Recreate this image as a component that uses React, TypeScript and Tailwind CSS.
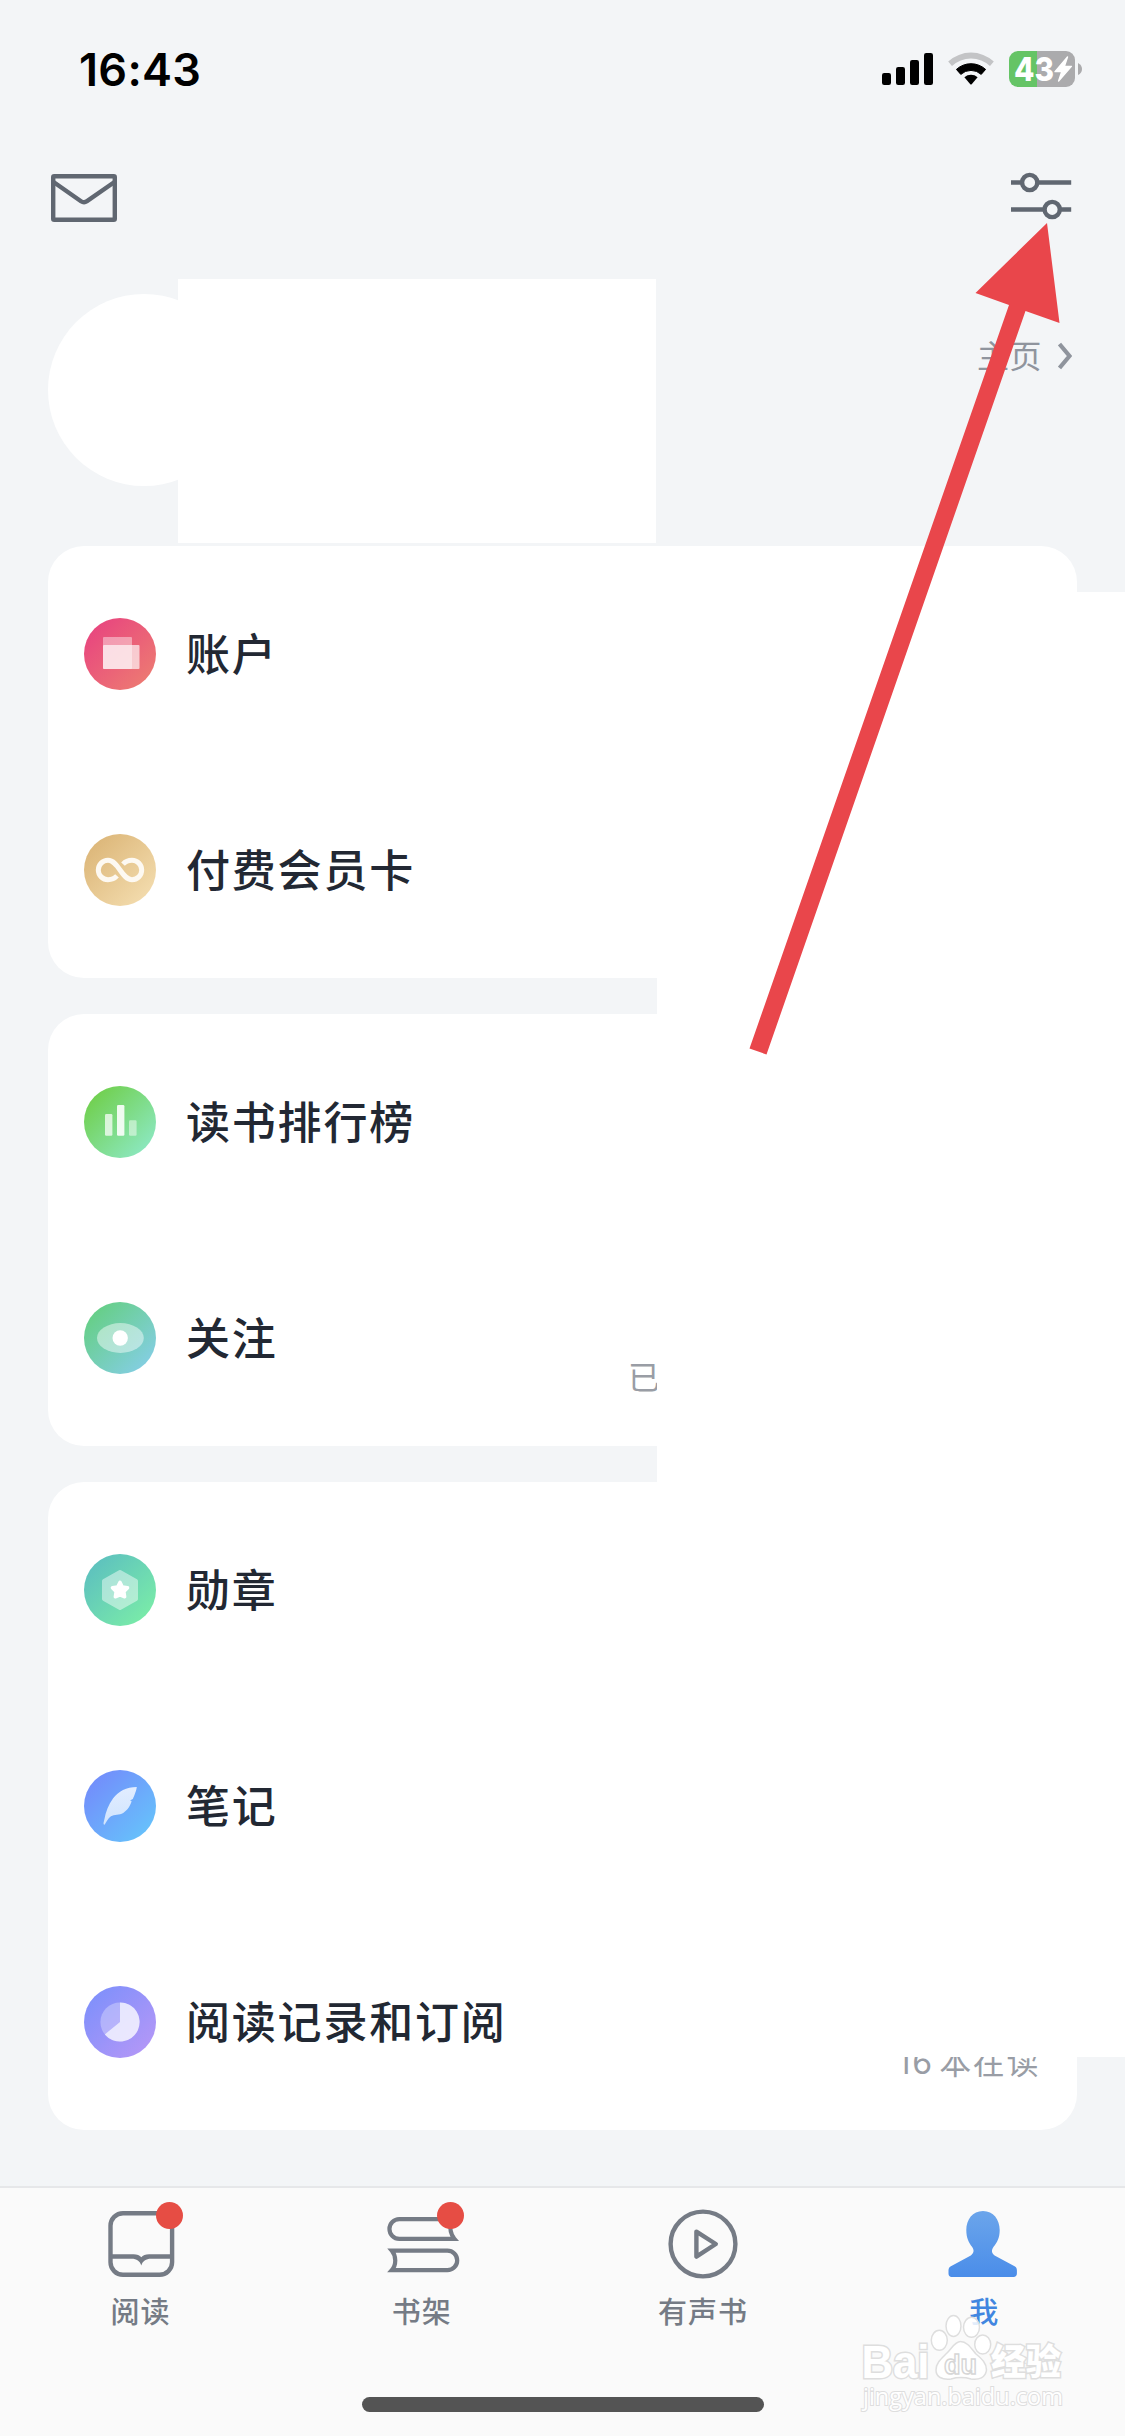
import type { ReactNode } from 'react';
import { clsx } from 'clsx';

interface MenuItem {
    id: string;
    label: string;
    from: string;
    to: string;
    glyph: ReactNode;
    note?: string;
    noteClass?: string;
}

interface Tab {
    id: string;
    label: string;
    icon: ReactNode;
    badge?: boolean;
    active?: boolean;
}

const menuGroups: MenuItem[][] = [
    [
        {
            id: 'account',
            label: '账户',
            from: '#e8457f',
            to: '#ed7a72',
            glyph: (
                <>
                    <rect x="19" y="19" width="29" height="32" rx="1" fill="#fff" opacity=".42" />
                    <rect x="19" y="27" width="36.5" height="24" rx="1" fill="#fff" opacity=".66" />
                </>
            ),
        },
        {
            id: 'card',
            label: '付费会员卡',
            from: '#dcb678',
            to: '#f3dcae',
            glyph: (
                <path
                    d="M33 41.9C30.6 44.5 27.4 45.7 24 45.7A9.7 9.7 0 0 1 24 26.3C34.5 26.3 37.5 45.7 48 45.7A9.7 9.7 0 0 0 48 26.3C44.6 26.3 41.4 27.5 39 30.1"
                    fill="none"
                    stroke="#fdf9f2"
                    strokeWidth="5"
                />
            ),
        },
    ],
    [
        {
            id: 'rank',
            label: '读书排行榜',
            from: '#70cf4b',
            to: '#8ce8c2',
            glyph: (
                <g fill="#fff">
                    <rect x="21" y="28" width="7.4" height="21.7" rx="1.2" opacity=".72" />
                    <rect x="33" y="19" width="7.4" height="30.7" rx="1.2" opacity=".88" />
                    <rect x="45" y="34.3" width="7.6" height="15.4" rx="1.2" opacity=".48" />
                </g>
            ),
        },
        {
            id: 'follow',
            label: '关注',
            from: '#65cf83',
            to: '#84cee4',
            note: '已关注',
            noteClass: 'left-[580px] top-[128px] text-[32px]',
            glyph: (
                <>
                    <ellipse cx="36.4" cy="36" rx="23.4" ry="15" fill="#fff" opacity=".46" />
                    <circle cx="36.2" cy="36" r="7.7" fill="#fff" />
                </>
            ),
        },
    ],
    [
        {
            id: 'medal',
            label: '勋章',
            from: '#5dc0bf',
            to: '#7aeca8',
            glyph: (
                <>
                    <path d="M36 18L52 27V45L36 54L20 45V27Z" fill="#fff" stroke="#fff" strokeWidth="4" strokeLinejoin="round" opacity=".46" />
                    <path
                        d="M36 28.2L38.4 33L43.6 33.8L39.9 37.6L40.7 42.8L36 40.9L31.3 42.8L32.1 37.6L28.4 33.8L33.6 33Z"
                        fill="#fff"
                        stroke="#fff"
                        strokeWidth="3.4"
                        strokeLinejoin="round"
                    />
                </>
            ),
        },
        {
            id: 'notes',
            label: '笔记',
            from: '#738cfb',
            to: '#66c2fb',
            glyph: (
                <path
                    d="M20.6 54.8C18.8 54.5 19.8 52 20.3 49.8C21.6 42 24.6 34.8 29 28.6C34.4 21.2 42.4 17 52.8 17C52.6 19.4 50.6 25.6 48.8 29L46 30.6L47.6 31C46.6 35.4 43.4 40.4 39.2 42.9C35.4 45.1 30.2 44 27 46.3C24 48.5 22.4 51.8 20.6 54.8Z"
                    fill="url(#feather)"
                />
            ),
        },
        {
            id: 'history',
            label: '阅读记录和订阅',
            from: '#7f90fb',
            to: '#b397f7',
            note: '16 本在读',
            noteClass: 'right-[37px] top-[129px] text-[32px] tracking-[1.6px] [word-spacing:-5px]',
            glyph: (
                <>
                    <circle cx="36" cy="36" r="19.6" fill="#fff" opacity=".3" />
                    <path d="M36 36V16.4A19.6 19.6 0 1 1 20.8 48.4Z" fill="#fff" opacity=".68" />
                </>
            ),
        },
    ],
];

const tabs: Tab[] = [
    {
        id: 'read',
        label: '阅读',
        badge: true,
        icon: (
            <>
                <rect x="5.5" y="5.2" width="61.6" height="61.6" rx="12.5" fill="none" stroke="#757b85" strokeWidth="4.4" />
                <path
                    d="M5.5 46.3H28.5C32 46.3 34.8 47.3 36.3 49.3C37.8 47.3 40.6 46.3 44 46.3H67V50.7H46C41 50.7 37.6 53 36.3 57.4C35 53 31.6 50.7 26.6 50.7H5.5Z"
                    fill="#757b85"
                />
            </>
        ),
    },
    {
        id: 'shelf',
        label: '书架',
        badge: true,
        icon: (
            <g fill="none" stroke="#757b85" strokeWidth="4.2" strokeMiterlimit="10">
                <path d="M68.4 30.9H13.3A9.85 9.85 0 0 1 13.3 11.2H64.4C63.6 19 64.6 26.6 68.4 30.9Z" />
                <path d="M5.8 42.6H61.4A9.8 9.8 0 0 1 61.4 62.2H5.8C10.4 57 10.4 48 5.8 42.6Z" />
            </g>
        ),
    },
    {
        id: 'audio',
        label: '有声书',
        icon: (
            <g fill="none" stroke="#757b85" strokeWidth="4.4" strokeLinejoin="round">
                <circle cx="36" cy="36" r="32.4" />
                <path d="M29.4 23.6L48.8 36L29.4 48.6Z" />
            </g>
        ),
    },
    {
        id: 'me',
        label: '我',
        active: true,
        icon: (
            <path
                d="M35 3C45.4 3 51.7 11.6 51.7 22C51.7 30 49 34.6 45.6 38.8C43.2 42 43.4 45.2 46.6 47.6L66.6 58.2C68.4 59.2 68.9 60.6 68.9 62.4V65.6C68.9 67.8 67.6 69 65.6 69H3.7C1.7 69 .5 67.8 .5 65.6V62.4C.5 60.6 1.1 59.2 2.9 58.2L22.8 47.6C26 45.2 26.4 42 24 38.8C20.8 34.6 18.3 30 18.3 22C18.3 11.6 24.6 3 35 3Z"
                fill="url(#person)"
            />
        ),
    },
];

function StatusBar() {
    return (
        <div className="flex h-[138px] items-center justify-between pl-[79px] pr-[43px]">
            <span className="text-[45px] font-semibold leading-none tracking-[0.3px] text-black">16:43</span>
            <svg width="201" height="40" viewBox="0 0 201 40">
                <g fill="#000">
                    <rect x="1" y="24" width="9" height="12" rx="2.2" />
                    <rect x="15" y="18" width="9" height="18" rx="2.2" />
                    <rect x="29" y="11" width="9" height="25" rx="2.2" />
                    <rect x="43" y="4" width="9" height="32" rx="2.2" />
                    <path d="M75.4 20.4A21.6 21.6 0 0 1 104.6 20.4L100.2 25.4A15 15 0 0 0 79.8 25.4Z" strokeWidth="1" stroke="#000" strokeLinejoin="round" />
                    <path d="M83.4 28.2A10.4 10.4 0 0 1 96.6 28.2L90.7 35.2Q90 36 89.3 35.2Z" />
                </g>
                <path d="M67.2 12.4A34 34 0 0 1 112.8 12.4L109 17A28 28 0 0 0 71 17Z" fill="#c3c4c6" />
                <path d="M156 2V38H137A9 9 0 0 1 128 29V11A9 9 0 0 1 137 2Z" fill="#65c466" />
                <path d="M156 2H185A9 9 0 0 1 194 11V29A9 9 0 0 1 185 38H156Z" fill="#ababad" />
                <path d="M197 14Q201 16 201 20T197 26Z" fill="#ababad" />
                <text x="133" y="31.7" fontSize="32.5" fontWeight="800" fill="#fff" textLength="40" lengthAdjust="spacingAndGlyphs">43</text>
                <path d="M186.5 8L174 22.6H180.8L177.6 32L190.4 17.4H183.4Z" fill="#fff" stroke="#fff" strokeWidth="1.4" strokeLinejoin="round" />
            </svg>
        </div>
    );
}

function Toolbar() {
    return (
        <div className="flex h-[120px] items-center justify-between pl-[51px] pr-[53px]">
            <svg width="66" height="48" viewBox="0 0 66 48" fill="none" stroke="#606771" strokeWidth="4.4">
                <rect x="2.2" y="2.2" width="61.6" height="43.6" rx="1" />
                <path d="M2.5 8L30 27.2Q33 29.2 36 27.2L63.5 8" />
            </svg>
            <svg className="-mt-1" width="61" height="48" viewBox="0 0 61 48" fill="none" stroke="#606771" strokeWidth="4.4">
                <path d="M0 10.5H10.8M27 10.5H60.2M0 37.5H33.8M49.8 37.5H60.2" />
                <circle cx="18.7" cy="10.5" r="7.6" />
                <circle cx="41.2" cy="37.5" r="7.6" />
            </svg>
        </div>
    );
}

function Profile() {
    return (
        <div className="flex h-[288px] items-start justify-between pl-12 pr-[53px] pt-[21px]">
            <div className="flex">
                <div className="-mr-[62px] mt-[15px] h-48 w-48 rounded-full bg-white" />
                <div className="h-[264px] w-[478px] bg-white" />
            </div>
            <div className="mt-14 flex items-center gap-4 text-[#8f949d]">
                <span className="pt-0.5 text-[32px] leading-[40px] tracking-[0.5px]">主页</span>
                <svg width="14" height="28" viewBox="0 0 14 28" fill="none" stroke="currentColor" strokeWidth="4.2">
                    <path d="M1.5 2L11.5 14L1.5 26" />
                </svg>
            </div>
        </div>
    );
}

function MenuRow({ item }: { item: MenuItem }) {
    const gradient = `menu-${item.id}`;

    return (
        <div className="relative flex h-[216px] items-center gap-[30px] pl-9">
            <svg width="72" height="72" viewBox="0 0 72 72">
                <defs>
                    <linearGradient id={gradient} x1=".1" y1=".1" x2=".9" y2=".9">
                        <stop stopColor={item.from} />
                        <stop offset="1" stopColor={item.to} />
                    </linearGradient>
                    <linearGradient id="feather" x1="0" y1="0" x2="0" y2="1">
                        <stop stopColor="#e2edff" />
                        <stop offset="1" stopColor="#d0e4fe" />
                    </linearGradient>
                </defs>
                <circle cx="36" cy="36" r="36" fill={`url(#${gradient})`} />
                {item.glyph}
            </svg>
            <span className="pt-0.5 text-[44px] font-medium leading-[60px] tracking-[1.8px] text-[#222833]">{item.label}</span>
            {item.note && (
                <span className={clsx('absolute whitespace-nowrap leading-[40px] text-[#999da5]', item.noteClass)}>
                    {item.note}
                </span>
            )}
        </div>
    );
}

function TabBar() {
    return (
        <nav className="mt-auto flex h-[250px] flex-col items-center border-t-2 border-[#e6e7e9] bg-[#fafafa]">
            <div className="flex w-full">
                {tabs.map((tab) => (
                    <div key={tab.id} className="flex flex-1 flex-col items-center pt-5">
                        <div className="relative">
                            <svg className="overflow-visible" width="72" height="72" viewBox="0 0 72 72">
                                <defs>
                                    <linearGradient id="person" x1="0" y1="0" x2="0" y2="1">
                                        <stop stopColor="#6ba5eb" />
                                        <stop offset="1" stopColor="#4a8de9" />
                                    </linearGradient>
                                </defs>
                                {tab.icon}
                            </svg>
                            {tab.badge && <span className="absolute -top-1.5 left-[51.5px] h-[27px] w-[27px] rounded-full bg-[#e64d44]" />}
                        </div>
                        <span
                            className={clsx(
                                'mt-[13px] text-[29px] font-medium leading-[40px] tracking-[1px]',
                                tab.active ? 'text-[#4186e0]' : 'text-[#757b85]'
                            )}
                        >
                            {tab.label}
                        </span>
                    </div>
                ))}
            </div>
            <div className="mb-6 mt-auto h-[15px] w-[402px] rounded-full bg-[#545454]" />
        </nav>
    );
}

function Watermark() {
    return (
        <svg className="absolute left-[850px] top-[2306px]" width="230" height="112" viewBox="0 0 230 112">
            <g fill="#fff" stroke="#dedede" strokeWidth="1.5">
                <g fillOpacity=".85">
                    <ellipse cx="89.3" cy="34.3" rx="8" ry="10" />
                    <ellipse cx="103.5" cy="20" rx="7.5" ry="10.5" />
                    <ellipse cx="121.5" cy="21.3" rx="8" ry="10" />
                    <ellipse cx="132.7" cy="38.5" rx="8" ry="9.5" />
                </g>
                <path d="M110.5 35.5C117 35.5 121 42 126 48C132 53 136.5 57 136.5 64C135.5 72 129 74 121 73C114 71 108 71 101 73C92 74 86 71 86 64C86 57 91 53 97 47C102 42 105 35.5 110.5 35.5Z" />
                <g strokeWidth="3" paintOrder="stroke">
                    <text x="11.5" y="72" fontSize="46" fontWeight="700" fontFamily="Liberation Sans" textLength="68" lengthAdjust="spacingAndGlyphs">Bai</text>
                    <text x="141" y="69" fontSize="36" fontWeight="900" fontFamily="Noto Sans CJK SC" textLength="70" lengthAdjust="spacingAndGlyphs">经验</text>
                    <text x="13" y="99" fontSize="24" fontFamily="Open Sans" strokeWidth="2" textLength="200" lengthAdjust="spacingAndGlyphs">jingyan.baidu.com</text>
                </g>
                <text x="94" y="67.5" fontSize="28" fontFamily="Liberation Sans" fontWeight="700" stroke="#d6d6d6" textLength="33" lengthAdjust="spacingAndGlyphs">du</text>
            </g>
        </svg>
    );
}

export default function App() {
    return (
        <div className="relative flex h-[2436px] w-[1125px] flex-col overflow-hidden bg-[#f3f5f7] font-['Inter','Noto_Sans_CJK_SC',sans-serif]">
            <StatusBar />
            <Toolbar />
            <Profile />
            <main className="flex flex-col gap-9 px-12">
                {menuGroups.map((group, i) => (
                    <section key={i} className="rounded-[36px] bg-white">
                        {group.map((item) => (
                            <MenuRow key={item.id} item={item} />
                        ))}
                    </section>
                ))}
            </main>
            <TabBar />

            {/* blank panel that hides the private values on the right */}
            <div className="absolute right-0 top-[592px] h-[1465px] w-[468px] bg-white" />

            <svg className="absolute left-[740px] top-[215px]" width="330" height="850" viewBox="740 215 330 850">
                <path d="M1047 223L1059.5 323L1025.5 311L766.5 1054.5L749.5 1048.5L1009 305L975.5 293Z" fill="#e9464b" />
            </svg>

            <Watermark />
        </div>
    );
}
